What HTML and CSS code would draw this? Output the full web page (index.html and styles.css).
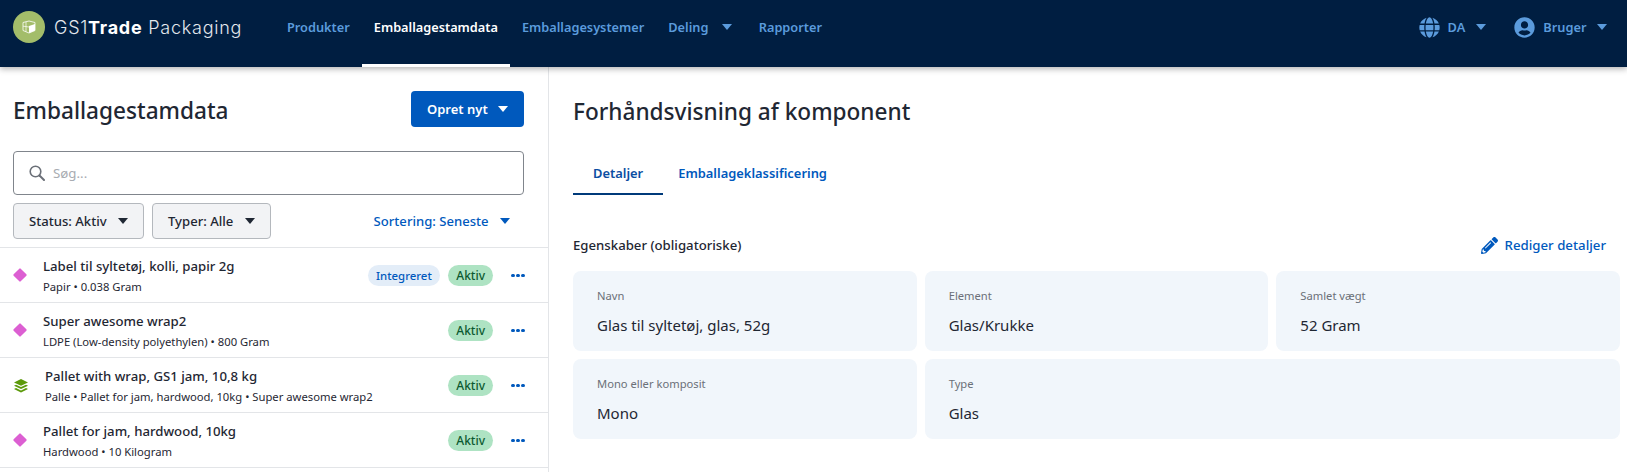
FILE: index.html
```html
<!DOCTYPE html>
<html lang="da">
<head>
  <meta charset="UTF-8" />
  <title>GS1Trade Packaging</title>
  <link rel="stylesheet" href="styles.css">
</head>
<body>
  <header class="topbar">
    <div class="brand">
      <span class="brand-mark">
        <svg viewBox="0 0 14 14" width="14" height="14"><path d="M1 2.500 7 1l6 1.500v8L7 13l-6-2.500z" fill="none" stroke="#fff" stroke-width=".8"/><path d="M7 6l6-2v6.500L7 13z" fill="#fff"/><path d="M4 1.800v9.800M1 6.200l6 .8" stroke="#fff" stroke-width=".7"/></svg>
      </span>
      <span class="brand-name">GS1<b>Trade</b> Packaging</span>
    </div>
    <nav class="main-nav">
      <a href="#">Produkter</a>
      <a href="#" class="active">Emballagestamdata</a>
      <a href="#">Emballagesystemer</a>
      <a href="#">Deling <i class="caret"></i></a>
      <a href="#">Rapporter</a>
    </nav>
    <div class="top-right">
      <a href="#">
        <svg class="top-icon" viewBox="0 0 496 512"><path fill="currentColor" d="M336.500 160C322 70.700 287.800 8 248 8s-74 62.700-88.500 152h177zM152 256c0 22.200 1.200 43.500 3.300 64h185.300c2.100-20.500 3.300-41.800 3.300-64s-1.200-43.500-3.300-64H155.300c-2.100 20.500-3.300 41.800-3.300 64zm324.700-96c-28.600-67.900-86.500-120.400-158-141.600 24.400 33.800 41.200 84.700 50 141.600h108zM177.200 18.400C105.800 39.600 47.800 92.100 19.300 160h108c8.700-56.900 25.500-107.800 49.900-141.600zM487.400 192H372.700c2.100 21 3.300 42.500 3.300 64s-1.200 43-3.300 64h114.600c5.500-20.500 8.600-41.800 8.600-64s-3.100-43.500-8.500-64zM120 256c0-21.500 1.200-43 3.300-64H8.600C3.200 212.500 0 233.800 0 256s3.200 43.500 8.600 64h114.600c-2-21-3.200-42.500-3.200-64zm39.500 96c14.500 89.300 48.700 152 88.500 152s74-62.700 88.500-152h-177zm159.300 141.600c71.400-21.200 129.400-73.700 158-141.600h-108c-8.800 56.900-25.600 107.800-50 141.600zM19.300 352c28.600 67.900 86.500 120.400 158 141.600-24.400-33.800-41.200-84.700-50-141.600h-108z"/></svg>
        DA <i class="caret"></i>
      </a>
      <a href="#">
        <svg class="top-icon" viewBox="0 0 496 512"><path fill="currentColor" d="M248 8C111 8 0 119 0 256s111 248 248 248 248-111 248-248S385 8 248 8zm0 96c48.600 0 88 39.400 88 88s-39.400 88-88 88-88-39.400-88-88 39.400-88 88-88zm0 344c-58.700 0-111.300-26.600-146.500-68.200 18.800-35.400 55.600-59.800 98.500-59.800 2.400 0 4.800.4 7.100 1.100 13 4.200 26.600 6.900 40.900 6.900 14.300 0 28-2.700 40.900-6.900 2.300-.7 4.700-1.100 7.100-1.100 42.900 0 79.700 24.400 98.500 59.800C359.300 421.400 306.700 448 248 448z"/></svg>
        Bruger <i class="caret"></i>
      </a>
    </div>
  </header>

  <main class="layout">
    <section class="list-panel">
      <div class="list-head">
        <h1>Emballagestamdata</h1>
        <button class="btn-primary">Opret nyt <i class="caret"></i></button>
      </div>
      <div class="search">
        <svg viewBox="0 0 16 16" width="16" height="16"><circle cx="6.500" cy="6.500" r="5.300" fill="none" stroke="#6b7078" stroke-width="1.600"/><path d="M10.500 10.500 15 15" stroke="#6b7078" stroke-width="2" stroke-linecap="round"/></svg>
        <span>Søg...</span>
      </div>
      <div class="filters">
        <button class="btn-filter">Status: Aktiv <i class="caret"></i></button>
        <button class="btn-filter">Typer: Alle <i class="caret"></i></button>
        <a href="#" class="sort">Sortering: Seneste <i class="caret"></i></a>
      </div>
      <ul class="items">
        <li class="item">
          <i class="diamond"></i>
          <div class="item-text">
            <div class="item-title">Label til syltetøj, kolli, papir 2g</div>
            <div class="item-sub">Papir • 0.038 Gram</div>
          </div>
          <span class="tag tag-blue">Integreret</span>
          <span class="tag tag-green">Aktiv</span>
          <span class="dots"><i></i><i></i><i></i></span>
        </li>
        <li class="item">
          <i class="diamond"></i>
          <div class="item-text">
            <div class="item-title">Super awesome wrap2</div>
            <div class="item-sub">LDPE (Low-density polyethylen) • 800 Gram</div>
          </div>
          <span class="tag tag-green">Aktiv</span>
          <span class="dots"><i></i><i></i><i></i></span>
        </li>
        <li class="item">
          <svg class="layers" viewBox="0 0 14 14" width="14" height="14"><path fill="#5c9a0b" d="M7 0l7 3.400-7 3.400L0 3.400z"/><path fill="#5c9a0b" d="M2 5.700l5 2.400 5-2.400 2 1-7 3.400-7-3.400z"/><path fill="#5c9a0b" d="M2 9l5 2.400L12 9l2 1-7 3.400L0 10z"/></svg>
          <div class="item-text">
            <div class="item-title">Pallet with wrap, GS1 jam, 10,8 kg</div>
            <div class="item-sub">Palle • Pallet for jam, hardwood, 10kg • Super awesome wrap2</div>
          </div>
          <span class="tag tag-green">Aktiv</span>
          <span class="dots"><i></i><i></i><i></i></span>
        </li>
        <li class="item">
          <i class="diamond"></i>
          <div class="item-text">
            <div class="item-title">Pallet for jam, hardwood, 10kg</div>
            <div class="item-sub">Hardwood • 10 Kilogram</div>
          </div>
          <span class="tag tag-green">Aktiv</span>
          <span class="dots"><i></i><i></i><i></i></span>
        </li>
      </ul>
    </section>

    <section class="preview">
      <h2>Forhåndsvisning af komponent</h2>
      <div class="tabs">
        <a href="#" class="tab active">Detaljer</a>
        <a href="#" class="tab">Emballageklassificering</a>
      </div>
      <div class="props-head">
        <h3>Egenskaber (obligatoriske)</h3>
        <a href="#" class="edit">
          <svg viewBox="0 0 512 512" width="17" height="17"><path fill="currentColor" d="M497.900 142.100l-46.100 46.100c-4.700 4.700-12.300 4.700-17 0l-111-111c-4.700-4.700-4.700-12.300 0-17l46.100-46.100c18.700-18.700 49.100-18.700 67.900 0l60.100 60.100c18.800 18.700 18.800 49.100 0 67.900zM284.200 99.800L21.600 362.400.4 483.900c-2.900 16.400 11.400 30.600 27.800 27.800l121.500-21.300 262.600-262.600c4.700-4.700 4.700-12.300 0-17l-111-111c-4.800-4.700-12.400-4.700-17.100 0zM124.100 339.900c-5.500-5.500-5.500-14.300 0-19.800l154-154c5.500-5.500 14.300-5.500 19.800 0s5.500 14.300 0 19.800l-154 154c-5.500 5.500-14.300 5.500-19.800 0zM88 424h48v36.300l-64.500 11.300-31.100-31.100L51.700 376H88v48z"/></svg>
          Rediger detaljer
        </a>
      </div>
      <div class="props">
        <div class="prop"><span>Navn</span><strong>Glas til syltetøj, glas, 52g</strong></div>
        <div class="prop"><span>Element</span><strong>Glas/Krukke</strong></div>
        <div class="prop"><span>Samlet vægt</span><strong>52 Gram</strong></div>
        <div class="prop"><span>Mono eller komposit</span><strong>Mono</strong></div>
        <div class="prop prop-wide"><span>Type</span><strong>Glas</strong></div>
      </div>
    </section>
  </main>
</body>
</html>
```

FILE: styles.css
```css
* {
  box-sizing: border-box;
}
html, body {
  height: 100%;
}
body {
  margin: 0;
  font-family: "Noto Sans", Arial, sans-serif;
  color: #1f2733;
  background: #fff;
  overflow: hidden;
}
a {
  text-decoration: none;
}
.caret {
  display: inline-block;
  width: 0;
  height: 0;
  border-left: 5.5px solid transparent;
  border-right: 5.5px solid transparent;
  border-top: 6px solid currentColor;
  margin-left: 7px;
  vertical-align: 2px;
}

/* top bar */
.topbar {
  height: 67px;
  background: #001e41;
  display: flex;
  align-items: flex-start;
  padding-left: 13px;
  box-shadow: 0 2px 6px rgba(0, 0, 0, 0.3);
  position: relative;
}
.brand {
  display: flex;
  align-items: center;
  height: 54px;
  width: 262px;
}
.brand-mark {
  width: 32px;
  height: 32px;
  border-radius: 50%;
  background: #a3bd6a;
  display: flex;
  align-items: center;
  justify-content: center;
  margin-right: 9px;
}
.brand-name {
  font-family: Inter, sans-serif;
  font-size: 18px;
  font-weight: 300;
  color: #e3e8ee;
  letter-spacing: 0.75px;
}
.brand-name b {
  font-weight: 700;
  color: #fff;
}
.main-nav {
  display: flex;
  height: 67px;
}
.main-nav a {
  height: 67px;
  padding: 0 12px;
  line-height: 55px;
  font-size: 12.75px;
  font-weight: 600;
  color: #5b9bdc;
  white-space: nowrap;
}
.main-nav a.active {
  color: #fff;
  border-bottom: 3px solid #fff;
}
.main-nav .caret {
  margin-left: 10px;
  margin-right: 3px;
}
.top-right {
  margin-left: auto;
  display: flex;
  gap: 28.5px;
  padding-right: 20px;
}
.top-right a {
  display: flex;
  align-items: center;
  height: 54px;
  font-size: 12.8px;
  font-weight: 600;
  color: #5b9bdc;
}
.top-icon {
  width: 21px;
  height: 21px;
  margin-right: 8px;
}
.top-right .caret {
  margin-left: 10.5px;
  vertical-align: 0;
}

/* layout */
.layout {
  display: flex;
  height: 405px;
}
.list-panel {
  width: 549px;
  border-right: 1px solid #e3e5e8;
  flex-shrink: 0;
}
.list-head {
  display: flex;
  justify-content: space-between;
  align-items: center;
  padding: 24px 24px 0 13px;
  height: 60px;
}
.list-head h1,
.preview h2 {
  margin: 0;
  font-size: 22.6px;
  font-weight: 500;
}
.list-head h1 {
  padding-top: 2px;
}
.btn-primary {
  width: 113px;
  height: 36px;
  border: 0;
  border-radius: 4px;
  background: #0059bd;
  color: #fff;
  font-family: inherit;
  font-size: 13px;
  font-weight: 600;
}
.search {
  margin: 24px 24px 0 13px;
  height: 44px;
  border: 1px solid #80858c;
  border-radius: 4px;
  display: flex;
  align-items: center;
  gap: 8px;
  padding-left: 15px;
  font-size: 13.3px;
  color: #a8acb2;
}
.filters {
  display: flex;
  gap: 8px;
  align-items: center;
  margin: 8px 24px 0 13px;
}
.btn-filter {
  height: 36px;
  padding: 0 15px;
  border: 1px solid #b4b8bd;
  border-radius: 4px;
  background: #f2f3f5;
  color: #1f2733;
  font-family: inherit;
  font-size: 13.1px;
  font-weight: 500;
}
.sort {
  margin-left: auto;
  margin-right: 14px;
  font-size: 13.1px;
  font-weight: 500;
  color: #0059bd;
}
.sort .caret {
  margin-left: 8px;
}
.btn-filter .caret {
  margin-left: 8px;
}

/* list */
.items {
  list-style: none;
  margin: 8px 0 0;
  padding: 0;
  border-top: 1px solid #e3e5e8;
}
.item {
  height: 55px;
  border-bottom: 1px solid #e3e5e8;
  display: flex;
  align-items: center;
  padding: 1px 23px 0 14px;
}
.diamond {
  width: 10px;
  height: 10px;
  margin: -2px 18px 0 1px;
  background: #dc5fd2;
  transform: rotate(45deg);
  border-radius: 1px;
  flex-shrink: 0;
}
.layers {
  margin: 0 17px 0 0;
  flex-shrink: 0;
}
.item-text {
  flex: 1;
}
.item-title {
  font-size: 13.2px;
  font-weight: 500;
  line-height: 18px;
}
.item-sub {
  font-size: 11.25px;
  line-height: 16px;
  margin-top: 4px;
}
.tag {
  height: 21px;
  line-height: 21px;
  border-radius: 10.5px;
  padding: 0 8px;
  font-size: 12px;
  font-weight: 500;
  margin-left: 8px;
}
.tag-blue {
  background: #e3edf8;
  color: #0059bd;
  font-size: 11.4px;
  padding: 0 8.5px;
}
.tag-green {
  background: #aee3c3;
  color: #0c5a30;
}
.dots {
  display: flex;
  gap: 1.5px;
  width: 14px;
  margin: 0 0 0 18px;
}
.dots i {
  width: 3.6px;
  height: 3.6px;
  border-radius: 50%;
  background: #0059bd;
}

/* preview */
.preview {
  flex: 1;
  padding: 0 7px 0 24px;
}
.preview h2 {
  padding-top: 25.5px;
  height: 60px;
  line-height: 38px;
}
.tabs {
  display: flex;
  margin-top: 32px;
  height: 36px;
}
.tab {
  padding: 0 20px;
  font-size: 12.9px;
  font-weight: 600;
  color: #0059bd;
  line-height: 28px;
}
.tab.active {
  color: #0b4ea2;
  border-bottom: 2px solid #003a7a;
}
.tab + .tab {
  padding-left: 15px;
}
.props-head {
  display: flex;
  justify-content: space-between;
  align-items: center;
  margin-top: 38px;
  height: 24px;
  padding-right: 14px;
}
.props-head h3 {
  margin: 0;
  font-size: 13.2px;
  font-weight: 500;
}
.edit {
  display: flex;
  align-items: center;
  gap: 7px;
  font-size: 13.25px;
  font-weight: 500;
  color: #0059bd;
}
.props {
  display: grid;
  grid-template-columns: repeat(3, 1fr);
  gap: 8px;
  margin-top: 14px;
}
.prop {
  background: #f1f6fb;
  border-radius: 8px;
  height: 80px;
  padding: 16px 24px;
  display: flex;
  flex-direction: column;
}
.prop-wide {
  grid-column: span 2;
}
.prop span {
  font-size: 11.2px;
  line-height: 18px;
  color: #6b7078;
}
.prop strong {
  font-size: 15px;
  font-weight: 400;
  margin-top: 10px;
  line-height: 20px;
}
```
